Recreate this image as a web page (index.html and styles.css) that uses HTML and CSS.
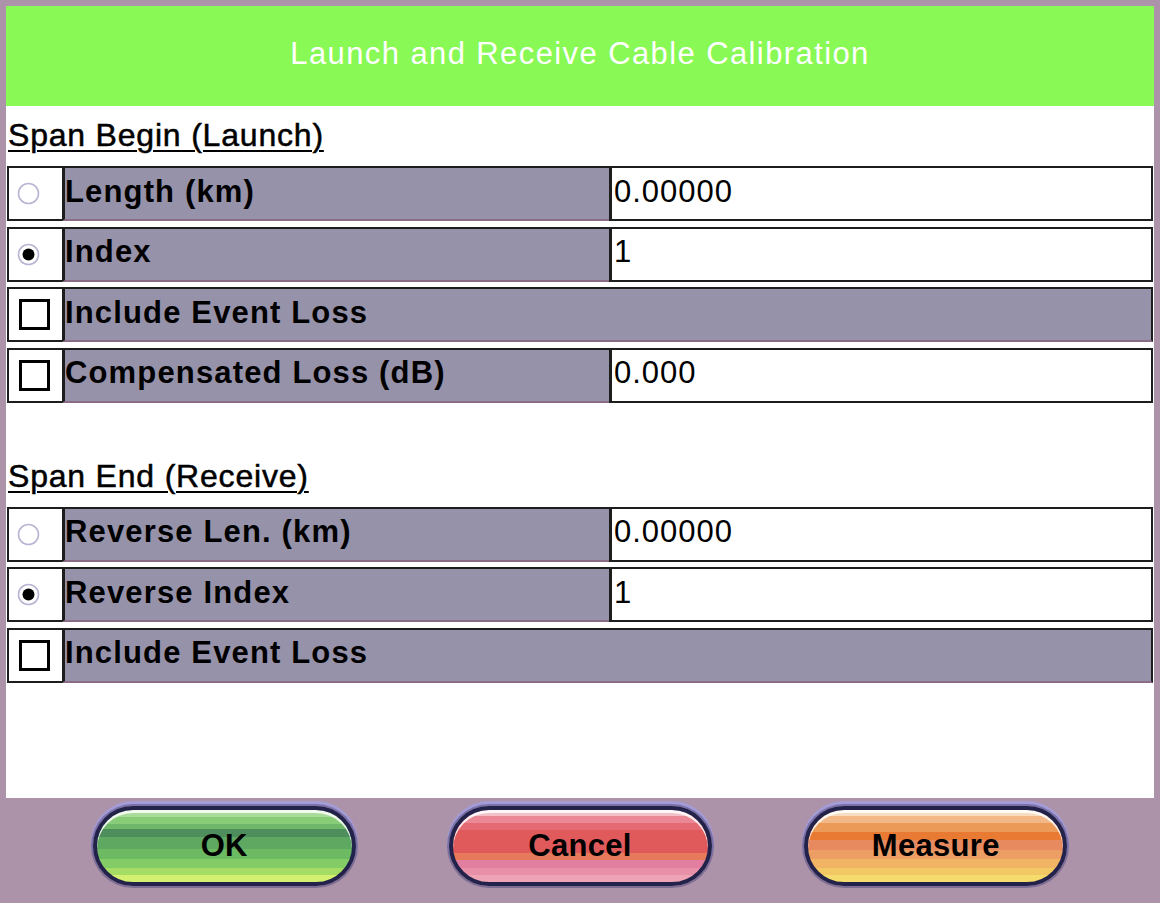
FILE: index.html
```html
<!DOCTYPE html>
<html lang="en">
<head>
	<meta charset="UTF-8">
	<title>Launch and Receive Cable Calibration</title>
	<link rel="stylesheet" href="styles.css">
</head>
<body>
<div class="window">
	<div class="titlebar">Launch and Receive Cable Calibration</div>
	<div class="content">
		<div class="group">
			<h2 class="group-title">Span Begin (Launch)</h2>
			<div class="rows">
				<div class="row">
					<div class="pick pick-radio">
						<svg class="radio" width="23" height="23" viewBox="0 0 23 23"><circle cx="11.5" cy="11.5" r="10" fill="#fff" stroke="#bbb4d2" stroke-width="1.6"/></svg>
					</div>
					<div class="label">Length (km)</div>
					<div class="value">0.00000</div>
				</div>
				<div class="row">
					<div class="pick pick-radio">
						<svg class="radio" width="23" height="23" viewBox="0 0 23 23"><circle cx="11.5" cy="11.5" r="10" fill="#fff" stroke="#bbb4d2" stroke-width="1.6"/><circle cx="11.5" cy="11.5" r="6" fill="#000"/></svg>
					</div>
					<div class="label">Index</div>
					<div class="value">1</div>
				</div>
				<div class="row">
					<div class="pick"><span class="check"></span></div>
					<div class="label wide">Include Event Loss</div>
				</div>
				<div class="row">
					<div class="pick"><span class="check"></span></div>
					<div class="label">Compensated Loss (dB)</div>
					<div class="value">0.000</div>
				</div>
			</div>
		</div>
		<div class="group">
			<h2 class="group-title">Span End (Receive)</h2>
			<div class="rows">
				<div class="row">
					<div class="pick pick-radio">
						<svg class="radio" width="23" height="23" viewBox="0 0 23 23"><circle cx="11.5" cy="11.5" r="10" fill="#fff" stroke="#bbb4d2" stroke-width="1.6"/></svg>
					</div>
					<div class="label">Reverse Len. (km)</div>
					<div class="value">0.00000</div>
				</div>
				<div class="row">
					<div class="pick pick-radio">
						<svg class="radio" width="23" height="23" viewBox="0 0 23 23"><circle cx="11.5" cy="11.5" r="10" fill="#fff" stroke="#bbb4d2" stroke-width="1.6"/><circle cx="11.5" cy="11.5" r="6" fill="#000"/></svg>
					</div>
					<div class="label">Reverse Index</div>
					<div class="value">1</div>
				</div>
				<div class="row">
					<div class="pick"><span class="check"></span></div>
					<div class="label wide">Include Event Loss</div>
				</div>
			</div>
		</div>
	</div>
	<div class="footer">
		<button class="btn btn-ok">OK</button>
		<button class="btn btn-cancel">Cancel</button>
		<button class="btn btn-measure">Measure</button>
	</div>
</div>
</body>
</html>
```
FILE: styles.css
```css
*{
	margin: 0;
	padding: 0;
	box-sizing: border-box;
}
body{
	width: 1160px;
	height: 903px;
	overflow: hidden;
	background: #ad93a9;
	font-family: "Liberation Sans", Arial, sans-serif;
	color: #000;
}
.titlebar{
	margin: 6px 6px 0;
	height: 100px;
	background: #89f955;
	color: #fff;
	font-size: 31px;
	letter-spacing: 1.4px;
	display: flex;
	align-items: center;
	justify-content: center;
	padding-bottom: 4px;
}
.content{
	margin: 0 6px;
	height: 692px;
	background: #fff;
}
.group{padding-top: 11px;}
.group + .group{margin-top: 44px;}
.group-title{
	font-size: 32px;
	font-weight: normal;
	line-height: 37px;
	letter-spacing: 0.8px;
	-webkit-text-stroke: 0.5px #000;
	margin: 0 0 12px 2px;
	text-decoration: underline;
	text-decoration-thickness: 2px;
	text-underline-offset: 4px;
}
.rows{
	display: grid;
	row-gap: 5.5px;
	padding: 0 1px;
}
.row{
	display: grid;
	grid-template-columns: 55px 547px 1fr;
	height: 55px;
}
.pick{
	background: #fff;
	border: 2px solid #1d1d1d;
	border-right: 0;
	display: flex;
	align-items: center;
	justify-content: center;
}
.pick-radio{justify-content: flex-start; padding-left: 8px;}
.radio{display: block;}
.check{
	width: 31px;
	height: 31px;
	border: 3px solid #000;
	background: #fff;
	margin-left: -2px;
}
.label{
	background: #9592a9;
	border: 2px solid #1d1d1d;
	border-left-width: 3px;
	border-right: 0;
	border-bottom-color: #8a6c86;
	font-size: 31px;
	font-weight: bold;
	letter-spacing: 1.15px;
	display: flex;
	align-items: center;
	padding-bottom: 4px;
	white-space: nowrap;
}
.label.wide{grid-column: 2 / 4; border-right: 2px solid #1d1d1d;}
.value{
	background: #fff;
	border: 2px solid #1d1d1d;
	border-left-width: 3px;
	font-size: 31px;
	letter-spacing: 1px;
	display: flex;
	align-items: center;
	padding: 0 0 4px 2px;
}
.footer{
	height: 105px;
	display: flex;
	justify-content: space-evenly;
	align-items: flex-start;
	padding-top: 8px;
}
.btn{
	width: 263px;
	height: 80px;
	border-radius: 40px;
	border: 4px solid #23224a;
	box-shadow: 0 0 0 2px rgba(88,78,130,0.55), 0 -3px 0 2px rgba(160,160,235,0.7), inset 0 3px 0 rgba(255,255,255,0.85);
	font-family: "Liberation Sans", Arial, sans-serif;
	font-size: 31px;
	font-weight: bold;
	letter-spacing: 0.3px;
	color: #000;
}
.btn-ok{
	background: linear-gradient(#a8dc98 0 10%, #88cc78 10% 20%, #6fb86a 20% 27%, #4e8e5c 27% 37%, #5fa862 37% 54%, #6cba62 54% 68%, #84cc66 68% 80%, #a4dc64 80% 90%, #d4f070 90%);
}
.btn-cancel{
	background: linear-gradient(#f4c0c8 0 8%, #ea8896 8% 18%, #e46a74 18% 28%, #e05a5c 28% 60%, #e87a5c 60% 70%, #e27fa0 70% 80%, #e890a8 80% 90%, #eea4b4 90%);
}
.btn-measure{
	background: linear-gradient(#f8dcc0 0 8%, #f2b888 8% 18%, #ec9a58 18% 30%, #e87a34 30% 42%, #e88a60 42% 55%, #ec9e64 55% 68%, #f0b464 68% 80%, #f2c864 80% 90%, #f6dc6c 90%);
}
```
